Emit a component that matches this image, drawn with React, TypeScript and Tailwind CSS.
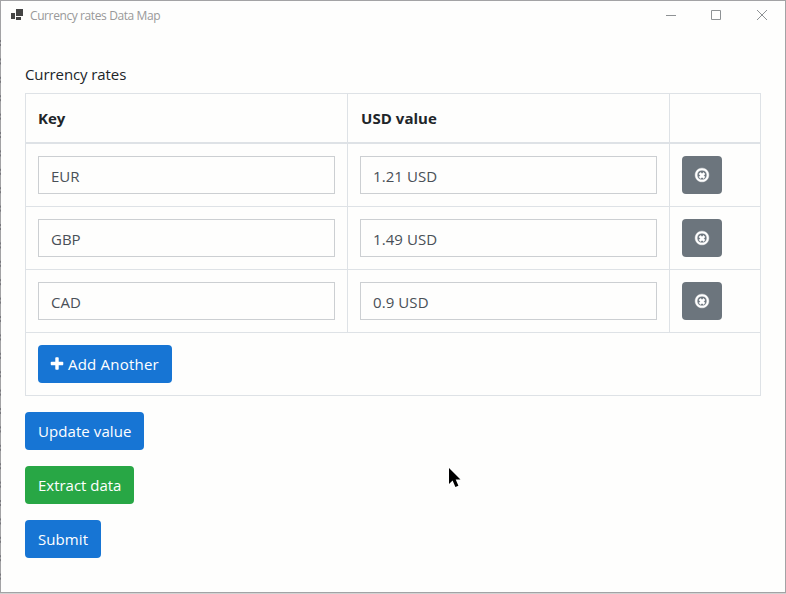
import React from "react";

const rows = [
  { key: "EUR", value: "1.21 USD" },
  { key: "GBP", value: "1.49 USD" },
  { key: "CAD", value: "0.9 USD" },
];

function CircleXIcon() {
  return (
    <svg width="16" height="16" viewBox="0 0 1792 1792" fill="currentColor" stroke="currentColor" strokeWidth="50">
      <path d="M1225 1129l-146 146q-10 10-23 10t-23-10l-137-137-137 137q-10 10-23 10t-23-10l-146-146q-10-10-10-23t10-23l137-137-137-137q-10-10-10-23t10-23l146-146q10-10 23-10t23 10l137 137 137-137q10-10 23-10t23 10l146 146q10 10 10 23t-10 23l-137 137 137 137q10 10 10 23t-10 23zm215-233q0-148-73-273t-198-198-273-73-273 73-198 198-73 273 73 273 198 198 273 73 273-73 198-198 73-273zm224 0q0 209-103 385.5t-279.5 279.5-385.5 103-385.5-103-279.5-279.5-103-385.5 103-385.5 279.5-279.5 385.5-103 385.5 103 279.5 279.5 103 385.5z" />
    </svg>
  );
}

function PlusIcon() {
  return (
    <svg width="16" height="16" viewBox="0 0 1792 1792" fill="currentColor" className="-ml-0.5 mr-[3px] shrink-0">
      <path d="M1600 736v192q0 40-28 68t-68 28h-416v416q0 40-28 68t-68 28h-192q-40 0-68-28t-28-68v-416h-416q-40 0-68-28t-28-68v-192q0-40 28-68t68-28h416v-416q0-40 28-68t68-28h192q40 0 68 28t28 68v416h416q40 0 68 28t28 68z" />
    </svg>
  );
}

function TitleBar() {
  return (
    <header className="flex h-[30px] items-start justify-between">
      <div className="flex items-start pl-[10px]">
        <svg width="12" height="11" viewBox="0 0 12 11" className="mt-2 fill-[#444444]" shapeRendering="crispEdges">
          <path d="M0 4h4v6H0zM5 0h7v7H5zM5 8h5v3H5z" />
        </svg>
        <span className="ml-[7px] mt-[5px] text-[12px] leading-5 tracking-[-0.4px] text-[#999999]">Currency rates Data Map</span>
      </div>
      <svg width="104" height="12" viewBox="0 0 104 12" className="mr-[15px] mt-2" fill="none" stroke="#8e9294">
        <path d="M0 6.5h10" />
        <path d="M45.5 1.5h9v9h-9z" />
        <path d="M91 1l10 10M101 1l-10 10" />
      </svg>
    </header>
  );
}

const btn = "flex h-[38px] items-center rounded-[4px] px-[13px] text-[15px] leading-6 whitespace-nowrap text-white";

export default function App() {
  return (
    <div className="flex h-[594px] w-[786px] flex-col border-b border-[#d2d2d2] bg-[#fefefd] font-['Open_Sans','Noto_Sans',sans-serif]">
      <div className="flex h-[593px] flex-col border border-[#a3a3a5]">
        <TitleBar />
        <main className="flex flex-col items-start pl-6 pt-[31px]">
          <h1 className="h-[31px] text-[15px] leading-6 tracking-[-0.09px] text-[#212529]">Currency rates</h1>
          <div className="w-[736px] border border-[#dee2e6]">
            <div className="grid h-[50px] grid-cols-[322px_322px_90px] border-b-2 border-[#dee2e6] text-[15px] font-bold leading-6 text-[#212529]">
              <div className="border-r border-[#dee2e6] px-3 py-3">Key</div>
              <div className="border-r border-[#dee2e6] py-3 pl-[13px] pr-3 tracking-[0.05px]">USD value</div>
            </div>
            {rows.map((row) => (
              <div key={row.key} className="grid h-[63px] grid-cols-[322px_322px_90px] border-b border-[#dee2e6] text-[15px] leading-6 text-[#495057]">
                <div className="border-r border-[#dee2e6] p-3">
                  <div className="h-[38px] border border-[#cccfd2] px-3 py-[7px]">{row.key}</div>
                </div>
                <div className="border-r border-[#dee2e6] p-3">
                  <div className="h-[38px] border border-[#cccfd2] px-3 py-[7px] tracking-[0.08px]">{row.value}</div>
                </div>
                <div className="p-3">
                  <button className="flex h-[38px] w-10 items-center justify-center rounded-[4px] bg-[#6c757d] text-white">
                    <CircleXIcon />
                  </button>
                </div>
              </div>
            ))}
            <div className="h-[62px] p-3">
              <button className={`${btn} w-[134px] bg-[#1775d4] tracking-[0.22px]`}>
                <PlusIcon />
                Add Another
              </button>
            </div>
          </div>
          <div className="mt-4 flex flex-col gap-4">
            <button className={`${btn} w-[119px] bg-[#1775d4] tracking-[0.08px]`}>Update value</button>
            <button className={`${btn} w-[109px] bg-[#28a745] tracking-[-0.02px]`}>Extract data</button>
            <button className={`${btn} w-[76px] bg-[#1775d4] tracking-[0.08px]`}>Submit</button>
          </div>
        </main>
      </div>
      {/* Darker specks along the window's left edge */}
      <svg width="1" height="552" viewBox="0 0 1 552" className="absolute left-0 top-[40px]" stroke="#77777c">
        <path d="M.5 0V552" strokeDasharray="2 2 2 12.4" />
      </svg>
      {/* Mouse pointer */}
      <svg width="12" height="20" viewBox="0 0 12 20" className="absolute left-[449px] top-[468px] fill-black">
        <path d="M0 0v16l3.6-3.4L6.4 19l3-1.2L6.7 11.5H11.5z" />
      </svg>
    </div>
  );
}
